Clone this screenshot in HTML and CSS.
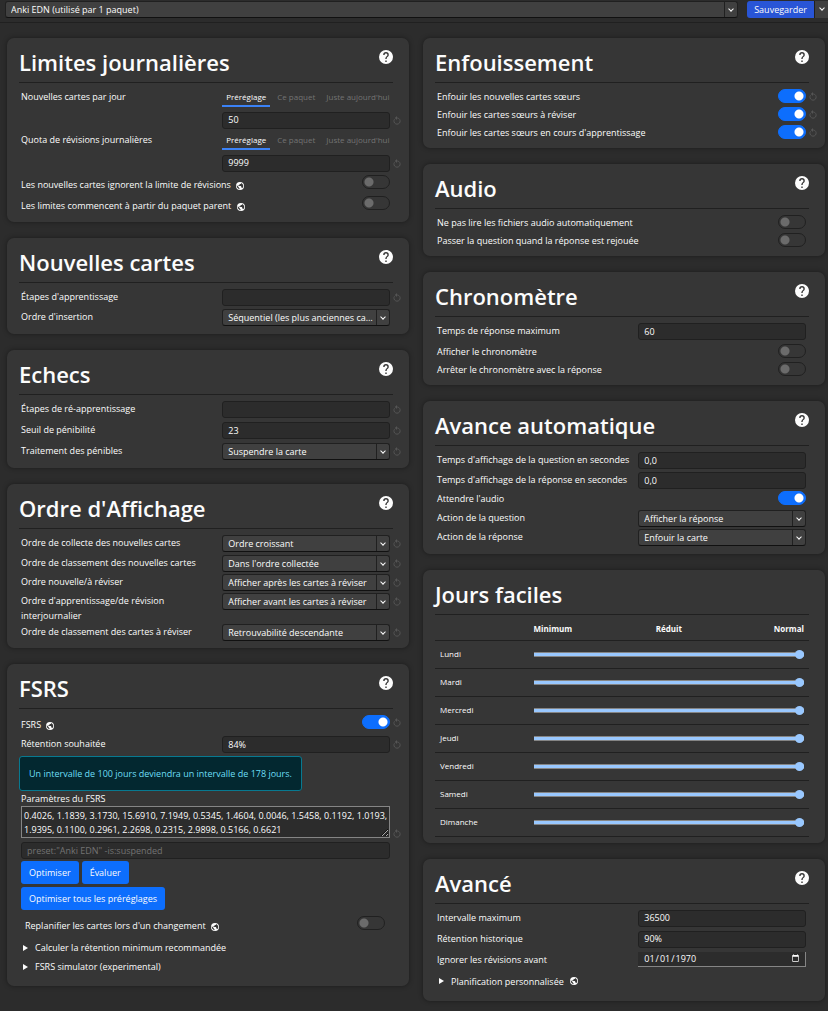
FILE: index.html
```html
<!DOCTYPE html>
<html lang="fr">
<head>
<meta charset="UTF-8">
<meta name="viewport" content="width=device-width, initial-scale=1">
<title>Options du paquet</title>
<link rel="stylesheet" href="styles.css">
</head>
<body>
<svg class="sprite" aria-hidden="true">
  <symbol id="help" viewBox="2 2 20 20"><path d="M15.07,11.25L14.17,12.17C13.45,12.89 13,13.5 13,15H11V14.5C11,13.39 11.45,12.39 12.17,11.67L13.41,10.41C13.78,10.05 14,9.55 14,9C14,7.89 13.1,7 12,7A2,2 0 0,0 10,9H8A4,4 0 0,1 12,5A4,4 0 0,1 16,9C16,9.88 15.64,10.67 15.07,11.25M13,19H11V17H13M12,2A10,10 0 0,0 2,12A10,10 0 0,0 12,22A10,10 0 0,0 22,12C22,6.47 17.5,2 12,2Z"/></symbol>
  <symbol id="earth" viewBox="2 2 20 20"><path d="M17.9,17.39C17.64,16.59 16.89,16 16,16H15V13A1,1 0 0,0 14,12H8V10H10A1,1 0 0,0 11,9V7H13A2,2 0 0,0 15,5V4.59C17.93,5.77 20,8.64 20,12C20,14.08 19.2,15.97 17.9,17.39M11,19.93C7.05,19.44 4,16.08 4,12C4,11.38 4.08,10.78 4.21,10.21L9,15V16A2,2 0 0,0 11,18M12,2A10,10 0 0,0 2,12A10,10 0 0,0 12,22A10,10 0 0,0 22,12A10,10 0 0,0 12,2Z"/></symbol>
  <symbol id="revert" viewBox="0 0 8 9"><path d="M3 2H4.5A3.1 3.1 0 1 1 1.5 3.3" fill="none" stroke="currentColor"/><path d="M4 0L1.8 2L4 4z"/></symbol>
</svg>

<header class="topbar">
  <div class="select preset">
    <select aria-label="Préréglage"><option>Anki EDN (utilisé par 1 paquet)</option></select>
  </div>
  <div class="save">
    <button class="save-btn" type="button">Sauvegarder</button>
    <button class="save-more" type="button" aria-label="Plus d'actions"></button>
  </div>
</header>

<main class="columns">
  <div class="column">

    <section class="card">
      <div class="card-head">
        <h1>Limites journalières</h1>
        <button class="help" type="button" aria-label="Aide"><svg><use href="#help"/></svg></button>
      </div>
      <div class="row limit">
        <label for="new">Nouvelles cartes par jour</label>
        <div>
          <div class="tabs">
            <button class="tab active" type="button">Préréglage</button>
            <button class="tab" type="button">Ce paquet</button>
            <button class="tab" type="button">Juste aujourd'hui</button>
          </div>
          <input class="field" id="new" type="text" inputmode="numeric" value="50">
        </div>
        <button class="revert" type="button" aria-label="Rétablir"><svg><use href="#revert"/></svg></button>
      </div>
      <div class="row limit">
        <label for="reviews">Quota de révisions journalières</label>
        <div>
          <div class="tabs">
            <button class="tab active" type="button">Préréglage</button>
            <button class="tab" type="button">Ce paquet</button>
            <button class="tab" type="button">Juste aujourd'hui</button>
          </div>
          <input class="field" id="reviews" type="text" inputmode="numeric" value="9999">
        </div>
        <button class="revert" type="button" aria-label="Rétablir"><svg><use href="#revert"/></svg></button>
      </div>
      <div class="row wide tall">
        <label for="ignore">Les nouvelles cartes ignorent la limite de révisions <svg class="earth"><use href="#earth"/></svg></label>
        <input class="toggle" id="ignore" type="checkbox">
      </div>
      <div class="row wide tall">
        <label for="parent">Les limites commencent à partir du paquet parent <svg class="earth"><use href="#earth"/></svg></label>
        <input class="toggle" id="parent" type="checkbox">
      </div>
    </section>

    <section class="card">
      <div class="card-head">
        <h1>Nouvelles cartes</h1>
        <button class="help" type="button" aria-label="Aide"><svg><use href="#help"/></svg></button>
      </div>
      <div class="row medium">
        <label for="steps">Étapes d'apprentissage</label>
        <input class="field" id="steps" type="text">
        <button class="revert" type="button" aria-label="Rétablir"><svg><use href="#revert"/></svg></button>
      </div>
      <div class="row medium">
        <label for="insertion">Ordre d'insertion</label>
        <div class="select"><select id="insertion"><option>Séquentiel (les plus anciennes cartes d'abord)</option></select></div>
      </div>
    </section>

    <section class="card">
      <div class="card-head">
        <h1>Echecs</h1>
        <button class="help" type="button" aria-label="Aide"><svg><use href="#help"/></svg></button>
      </div>
      <div class="row tall">
        <label for="resteps">Étapes de ré-apprentissage</label>
        <input class="field" id="resteps" type="text">
        <button class="revert" type="button" aria-label="Rétablir"><svg><use href="#revert"/></svg></button>
      </div>
      <div class="row tall">
        <label for="leech">Seuil de pénibilité</label>
        <input class="field" id="leech" type="text" inputmode="numeric" value="23">
        <button class="revert" type="button" aria-label="Rétablir"><svg><use href="#revert"/></svg></button>
      </div>
      <div class="row medium">
        <label for="leech-action">Traitement des pénibles</label>
        <div class="select"><select id="leech-action"><option>Suspendre la carte</option></select></div>
        <button class="revert" type="button" aria-label="Rétablir"><svg><use href="#revert"/></svg></button>
      </div>
    </section>

    <section class="card">
      <div class="card-head">
        <h1>Ordre d'Affichage</h1>
        <button class="help" type="button" aria-label="Aide"><svg><use href="#help"/></svg></button>
      </div>
      <div class="row medium">
        <label for="gather">Ordre de collecte des nouvelles cartes</label>
        <div class="select"><select id="gather"><option>Ordre croissant</option></select></div>
        <button class="revert" type="button" aria-label="Rétablir"><svg><use href="#revert"/></svg></button>
      </div>
      <div class="row">
        <label for="sort">Ordre de classement des nouvelles cartes</label>
        <div class="select"><select id="sort"><option>Dans l'ordre collectée</option></select></div>
        <button class="revert" type="button" aria-label="Rétablir"><svg><use href="#revert"/></svg></button>
      </div>
      <div class="row">
        <label for="mix">Ordre nouvelle/à réviser</label>
        <div class="select"><select id="mix"><option>Afficher après les cartes à réviser</option></select></div>
        <button class="revert" type="button" aria-label="Rétablir"><svg><use href="#revert"/></svg></button>
      </div>
      <div class="row">
        <label for="interday">Ordre d'apprentissage/de révision interjournalier</label>
        <div class="select"><select id="interday"><option>Afficher avant les cartes à réviser</option></select></div>
        <button class="revert" type="button" aria-label="Rétablir"><svg><use href="#revert"/></svg></button>
      </div>
      <div class="row">
        <label for="review-order">Ordre de classement des cartes à réviser</label>
        <div class="select"><select id="review-order"><option>Retrouvabilité descendante</option></select></div>
        <button class="revert" type="button" aria-label="Rétablir"><svg><use href="#revert"/></svg></button>
      </div>
    </section>

    <section class="card roomy">
      <div class="card-head">
        <h1>FSRS</h1>
        <button class="help" type="button" aria-label="Aide"><svg><use href="#help"/></svg></button>
      </div>
      <div class="row wide tall">
        <label for="fsrs">FSRS <svg class="earth"><use href="#earth"/></svg></label>
        <input class="toggle" id="fsrs" type="checkbox" checked>
        <button class="revert" type="button" aria-label="Rétablir"><svg><use href="#revert"/></svg></button>
      </div>
      <div class="row tall">
        <label for="retention">Rétention souhaitée</label>
        <input class="field" id="retention" type="text" value="84%">
        <button class="revert" type="button" aria-label="Rétablir"><svg><use href="#revert"/></svg></button>
      </div>
      <div class="alert">Un intervalle de 100 jours deviendra un intervalle de 178 jours.</div>
      <div class="params">
        <label for="params">Paramètres du FSRS</label>
        <textarea id="params" rows="2" spellcheck="false">0.4026, 1.1839, 3.1730, 15.6910, 7.1949, 0.5345, 1.4604, 0.0046, 1.5458, 0.1192, 1.0193, 1.9395, 0.1100, 0.2961, 2.2698, 0.2315, 2.9898, 0.5166, 0.6621</textarea>
        <button class="revert" type="button" aria-label="Rétablir"><svg><use href="#revert"/></svg></button>
        <input class="field" type="text" aria-label="Recherche" placeholder="preset:&quot;Anki EDN&quot; -is:suspended">
      </div>
      <div class="buttons">
        <button class="btn" type="button">Optimiser</button>
        <button class="btn" type="button">Évaluer</button>
      </div>
      <div class="buttons">
        <button class="btn" type="button">Optimiser tous les préréglages</button>
      </div>
      <div class="row wide tall inset">
        <label for="reschedule">Replanifier les cartes lors d'un changement <svg class="earth"><use href="#earth"/></svg></label>
        <input class="toggle" id="reschedule" type="checkbox">
      </div>
      <details><summary>Calculer la rétention minimum recommandée</summary></details>
      <details><summary>FSRS simulator (experimental)</summary></details>
    </section>
  </div>

  <div class="column">

    <section class="card">
      <div class="card-head">
        <h1>Enfouissement</h1>
        <button class="help" type="button" aria-label="Aide"><svg><use href="#help"/></svg></button>
      </div>
      <div class="row wide short">
        <label for="bury-new">Enfouir les nouvelles cartes sœurs</label>
        <input class="toggle" id="bury-new" type="checkbox" checked>
        <button class="revert" type="button" aria-label="Rétablir"><svg><use href="#revert"/></svg></button>
      </div>
      <div class="row wide short">
        <label for="bury-review">Enfouir les cartes sœurs à réviser</label>
        <input class="toggle" id="bury-review" type="checkbox" checked>
        <button class="revert" type="button" aria-label="Rétablir"><svg><use href="#revert"/></svg></button>
      </div>
      <div class="row wide short">
        <label for="bury-learning">Enfouir les cartes sœurs en cours d'apprentissage</label>
        <input class="toggle" id="bury-learning" type="checkbox" checked>
        <button class="revert" type="button" aria-label="Rétablir"><svg><use href="#revert"/></svg></button>
      </div>
    </section>

    <section class="card">
      <div class="card-head">
        <h1>Audio</h1>
        <button class="help" type="button" aria-label="Aide"><svg><use href="#help"/></svg></button>
      </div>
      <div class="row wide short">
        <label for="no-autoplay">Ne pas lire les fichiers audio automatiquement</label>
        <input class="toggle" id="no-autoplay" type="checkbox">
      </div>
      <div class="row wide short">
        <label for="skip-question">Passer la question quand la réponse est rejouée</label>
        <input class="toggle" id="skip-question" type="checkbox">
      </div>
    </section>

    <section class="card">
      <div class="card-head">
        <h1>Chronomètre</h1>
        <button class="help" type="button" aria-label="Aide"><svg><use href="#help"/></svg></button>
      </div>
      <div class="row tall">
        <label for="max-time">Temps de réponse maximum</label>
        <input class="field" id="max-time" type="text" inputmode="numeric" value="60">
      </div>
      <div class="row wide short">
        <label for="show-timer">Afficher le chronomètre</label>
        <input class="toggle" id="show-timer" type="checkbox">
      </div>
      <div class="row wide short">
        <label for="stop-timer">Arrêter le chronomètre avec la réponse</label>
        <input class="toggle" id="stop-timer" type="checkbox">
      </div>
    </section>

    <section class="card">
      <div class="card-head">
        <h1>Avance automatique</h1>
        <button class="help" type="button" aria-label="Aide"><svg><use href="#help"/></svg></button>
      </div>
      <div class="row medium">
        <label for="q-seconds">Temps d'affichage de la question en secondes</label>
        <input class="field" id="q-seconds" type="text" inputmode="decimal" value="0,0">
      </div>
      <div class="row">
        <label for="a-seconds">Temps d'affichage de la réponse en secondes</label>
        <input class="field" id="a-seconds" type="text" inputmode="decimal" value="0,0">
      </div>
      <div class="row wide">
        <label for="wait-audio">Attendre l'audio</label>
        <input class="toggle" id="wait-audio" type="checkbox" checked>
      </div>
      <div class="row">
        <label for="q-action">Action de la question</label>
        <div class="select"><select id="q-action"><option>Afficher la réponse</option></select></div>
      </div>
      <div class="row medium">
        <label for="a-action">Action de la réponse</label>
        <div class="select"><select id="a-action"><option>Enfouir la carte</option></select></div>
      </div>
    </section>

    <section class="card">
      <div class="card-head">
        <h1>Jours faciles</h1>
      </div>
      <table class="days">
        <thead>
          <tr><td></td><th scope="col">Minimum</th><th scope="col">Réduit</th><th scope="col">Normal</th></tr>
        </thead>
        <tbody>
          <tr><td><label for="d1">Lundi</label></td><td colspan="3"><input id="d1" type="range" min="0" max="2" value="2"></td></tr>
          <tr><td><label for="d2">Mardi</label></td><td colspan="3"><input id="d2" type="range" min="0" max="2" value="2"></td></tr>
          <tr><td><label for="d3">Mercredi</label></td><td colspan="3"><input id="d3" type="range" min="0" max="2" value="2"></td></tr>
          <tr><td><label for="d4">Jeudi</label></td><td colspan="3"><input id="d4" type="range" min="0" max="2" value="2"></td></tr>
          <tr><td><label for="d5">Vendredi</label></td><td colspan="3"><input id="d5" type="range" min="0" max="2" value="2"></td></tr>
          <tr><td><label for="d6">Samedi</label></td><td colspan="3"><input id="d6" type="range" min="0" max="2" value="2"></td></tr>
          <tr><td><label for="d7">Dimanche</label></td><td colspan="3"><input id="d7" type="range" min="0" max="2" value="2"></td></tr>
        </tbody>
      </table>
    </section>

    <section class="card roomy">
      <div class="card-head">
        <h1>Avancé</h1>
        <button class="help" type="button" aria-label="Aide"><svg><use href="#help"/></svg></button>
      </div>
      <div class="row tall">
        <label for="max-ivl">Intervalle maximum</label>
        <input class="field" id="max-ivl" type="text" inputmode="numeric" value="36500">
      </div>
      <div class="row tall">
        <label for="hist">Rétention historique</label>
        <input class="field" id="hist" type="text" value="90%">
      </div>
      <div class="row tall">
        <label for="before">Ignorer les révisions avant</label>
        <input class="date" id="before" type="date" value="1970-01-01">
      </div>
      <details><summary>Planification personnalisée <svg class="earth"><use href="#earth"/></svg></summary></details>
    </section>
  </div>
</main>
</body>
</html>
```
FILE: styles.css
```css
*,
*::before,
*::after {
  box-sizing: border-box;
}

:root {
  color-scheme: dark;
  --canvas: #2c2c2c;
  --card: #363636;
  --border: #202020;
  --button: #404040;
  --blue: #0d6efd;
}

body {
  margin: 0;
  background: var(--canvas);
  color: #fcfcfc;
  font: 500 9px/18px "Open Sans", "Noto Sans", sans-serif;
}

button,
input,
select,
textarea {
  margin: 0;
  color: inherit;
  font: inherit;
}

svg {
  fill: currentColor;
}

.sprite {
  display: none;
}

/* top bar */

.topbar {
  display: flex;
  gap: 9px;
  height: 23px;
  padding: 1px 0 0 5px;
  border-bottom: 1px solid var(--border);
}

.preset {
  flex: 1;
}

.save {
  display: flex;
  height: 17px;
}

.save-btn,
.save-more {
  border: 0;
  padding: 0 7px;
  line-height: 17px;
}

.save-btn {
  border-radius: 3px 0 0 3px;
  background: #2955d6;
}

.save-more {
  display: flex;
  justify-content: center;
  align-items: flex-start;
  width: 14px;
  padding: 5px 0 0;
  border-left: 1px solid var(--border);
  background: var(--button);
}

.save-more::after,
.select::after {
  content: "";
  width: 4px;
  height: 4px;
  border: solid #fcfcfc;
  border-width: 0 1px 1px 0;
  transform: rotate(45deg);
}

/* cards */

.columns {
  display: grid;
  grid-template-columns: repeat(2, minmax(0, 1fr));
  gap: 14px;
  padding: 15px 3px 9px 7px;
}

.column {
  display: flex;
  flex-direction: column;
  gap: 16px;
}

.card {
  padding: 0 8px 6px 12px;
  border-radius: 7px;
  background: var(--card);
  box-shadow: 0 0 5px rgba(0, 0, 0, .4);
}

.card.roomy {
  padding-bottom: 10px;
}

.card-head {
  display: flex;
  justify-content: space-between;
  height: 45px;
  margin: 0 8px 5px 0;
  border-bottom: 1px solid var(--border);
}

h1 {
  margin: 0;
  font-size: 22px;
  font-weight: 600;
  line-height: 48px;
}

.help {
  height: 14px;
  margin-top: 12px;
  padding: 0;
  border: 0;
  background: none;
}

.help svg {
  display: block;
  width: 14px;
  height: 14px;
}

/* option rows */

.row {
  display: grid;
  grid-template-columns: minmax(0, 6fr) minmax(0, 5fr) 11px;
  align-items: start;
  min-height: 19px;
  padding: 1px 0 0 2px;
}

.row label {
  line-height: 15px;
}

.row.short {
  min-height: 18px;
}

.row.medium {
  min-height: 20px;
}

.row.tall {
  min-height: 21px;
}

.row.wide {
  grid-template-columns: 1fr auto 11px;
}

.wide.tall label {
  line-height: 20px;
}

.field {
  width: 100%;
  height: 17px;
  padding: 0 5px;
  border: 1px solid var(--border);
  border-radius: 3px;
  background: var(--canvas);
}

.field::placeholder {
  color: #737373;
}

.select {
  position: relative;
}

.select select {
  display: block;
  width: 100%;
  height: 17px;
  padding: 0 16px 0 5px;
  border: 1px solid var(--border);
  border-bottom-color: #111;
  border-radius: 3px;
  background: linear-gradient(var(--border), var(--border)) right 12px top / 1px 100% no-repeat var(--button);
  line-height: 14px;
  appearance: none;
  text-overflow: ellipsis;
}

.select::after {
  position: absolute;
  top: 6px;
  right: 5px;
  pointer-events: none;
}

.revert {
  justify-self: end;
  height: 17px;
  padding: 0;
  border: 0;
  background: none;
  color: #555;
}

.toggle + .revert {
  height: 14px;
}

.revert svg {
  display: block;
  width: 8px;
  height: 9px;
}

.limit {
  min-height: 43px;
}

.limit .revert {
  align-self: end;
  margin-bottom: 2px;
}

.tabs {
  display: flex;
  gap: 3px;
  margin-bottom: 4px;
}

.tab {
  height: 18px;
  padding: 0 4px;
  border: 0;
  border-bottom: 2px solid transparent;
  background: none;
  color: #737373;
  font-size: 8px;
  line-height: 16px;
  white-space: nowrap;
}

.tab.active {
  border-color: #3b82f6;
  color: #fcfcfc;
}

.toggle {
  width: 28px;
  height: 14px;
  border: 1px solid var(--border);
  border-radius: 7px;
  background: radial-gradient(circle at 6px 6px, #6b6b6b 4px, transparent 5px);
  appearance: none;
}

.toggle:checked {
  border-color: var(--blue);
  background: radial-gradient(circle at 20px 6px, #fff 4px, transparent 5px) var(--blue);
}

.earth {
  width: 8px;
  height: 8px;
  margin-left: 3px;
  vertical-align: -2px;
}

/* FSRS */

.alert {
  width: fit-content;
  padding: 8px 9px;
  border: 1px solid #087990;
  border-radius: 3px;
  background: #032830;
  color: #6edff6;
  line-height: 17px;
}

.params {
  display: grid;
  grid-template-columns: 1fr 11px;
  padding-left: 2px;
}

.params label {
  grid-column: 1 / -1;
  line-height: 15px;
}

.params textarea {
  display: block;
  height: 32px;
  padding: 2px 0 2px 2px;
  border: 1px solid #858585;
  background: var(--canvas);
  line-height: 14px;
  overflow: hidden;
}

.params .revert {
  align-self: end;
  height: 10px;
}

.params .field {
  margin-top: 4px;
}

.buttons {
  display: flex;
  gap: 3px;
  padding: 2px 0 1px 2px;
}

.btn {
  height: 23px;
  padding: 0 8px;
  border: 0;
  border-radius: 3px;
  background: var(--blue);
}

.row.inset {
  margin: 4px 0 2px;
  padding-left: 6px;
  padding-right: 5px;
}

summary {
  display: flex;
  align-items: center;
  padding-left: 4px;
  line-height: 19px;
}

summary::before {
  content: "";
  margin-right: 7px;
  border: solid transparent;
  border-width: 3px 0 3px 5px;
  border-left-color: #fcfcfc;
}

summary .earth {
  margin-left: 6px;
}

/* easy days */

.days {
  width: calc(100% - 8px);
  margin-top: -5px;
  border-collapse: collapse;
  table-layout: fixed;
  font-size: 8px;
}

.days th,
.days td {
  height: 28px;
  padding: 0 5px;
  border-bottom: 1px solid var(--border);
  line-height: 18px;
}

.days thead th,
.days thead td {
  height: 25px;
  padding-top: 4px;
}

.days th {
  font-weight: 700;
  text-align: center;
}

.days th:nth-child(2) {
  text-align: left;
}

.days th:last-child {
  text-align: right;
}

.days input {
  display: block;
  width: 100%;
  height: 9px;
  background: linear-gradient(#858585, #858585) center / 100% 5px no-repeat;
  appearance: none;
}

.days input::-webkit-slider-runnable-track {
  height: 9px;
  background: linear-gradient(#99c8ff, #99c8ff) center / 100% 3px no-repeat;
}

.days input::-webkit-slider-thumb {
  width: 9px;
  height: 9px;
  border-radius: 50%;
  background: #99c8ff;
  appearance: none;
}

/* advanced */

.date {
  width: 100%;
  height: 15px;
  padding: 0 5px;
  border: solid #858585;
  border-width: 0 1px 1px 0;
  background: var(--canvas);
}

.date::-webkit-calendar-picker-indicator {
  width: 9px;
  height: 9px;
  padding: 0;
}
```
